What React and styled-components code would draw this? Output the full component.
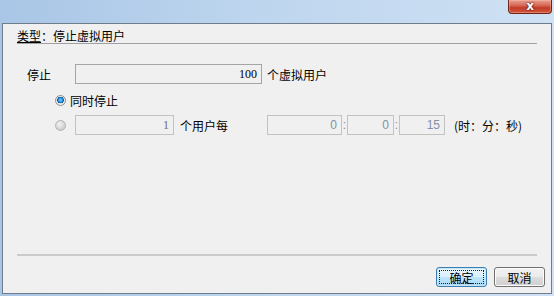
import React from 'react';
import styled, { createGlobalStyle } from 'styled-components';

const GlobalStyle = createGlobalStyle`
  html, body {
    margin: 0;
    padding: 0;
    overflow: hidden;
  }
  body {
    font-family: "Noto Sans CJK SC", "Liberation Sans", sans-serif;
    font-size: 12px;
    color: #000;
  }
`;

const Window = styled.div`
  position: relative;
  width: 554px;
  height: 296px;
  display: flex;
  flex-direction: column;
  background: linear-gradient(to right, #a9c6e6 0%, #bdd5ee 45%, #cfe1f4 100%);
`;

const TitleBar = styled.div`
  height: 23px;
  flex: none;
`;

const CloseButton = styled.div`
  position: absolute;
  top: 0;
  left: 508px;
  width: 44px;
  height: 14px;
  box-sizing: border-box;
  border: 1px solid #6e2418;
  border-top: none;
  border-radius: 0 0 4px 4px;
  background: linear-gradient(to bottom, #e8a090 0%, #d86a58 40%, #c23c28 60%, #d2583c 100%);
  box-shadow: inset 0 0 0 1px rgba(255, 200, 190, 0.35);
  display: flex;
  align-items: center;
  justify-content: center;
  color: #fff;
  font-family: "DejaVu Sans", sans-serif;
  font-weight: bold;
  font-size: 12px;
  line-height: 12px;
  padding-bottom: 1px;
  text-shadow: 0 0 2px #4a1008, 0 0 1px #4a1008;
`;

const Panel = styled.div`
  margin: 0 2px;
  height: 271px;
  box-sizing: border-box;
  border: 1px solid #6f7c8c;
  background: #f0f0f0;
  display: flex;
  flex-direction: column;
  padding: 5px 14px 6px 14px;
`;

const Heading = styled.div`
  height: 14px;
  line-height: 14px;
  border-bottom: 1px solid #a0a0a0;
`;

const Mnemonic = styled.span`
  text-decoration: underline;
  text-underline-offset: 1px;
`;

const Form = styled.div`
  display: flex;
  flex-direction: column;
  padding-left: 10px;
  padding-top: 20px;
`;

const Row = styled.div`
  display: flex;
  align-items: center;
  height: ${p => p.$h || 20}px;
  margin-top: ${p => p.$mt || 0}px;
  padding-left: ${p => p.$indent || 0}px;
`;

const Label = styled.span`
  width: ${p => (p.$w ? `${p.$w}px` : 'auto')};
  margin-left: ${p => p.$ml || 0}px;
  flex: none;
  white-space: nowrap;
`;

const Field = styled.div`
  width: ${p => p.$w}px;
  height: ${p => p.$h || 20}px;
  margin-left: ${p => p.$ml || 0}px;
  box-sizing: border-box;
  flex: none;
  border: 1px solid ${p => (p.$disabled ? '#c2c2c2' : '#a5a5a5')};
  background: #f0f0f0;
  display: flex;
  align-items: center;
  justify-content: flex-end;
  padding-right: 4px;
  font-family: ${p => (p.$sans ? '"Liberation Sans", sans-serif' : '"Liberation Serif", serif')};
  font-size: 12px;
  color: ${p => p.$color || '#000'};
`;

const Colon = styled.span`
  width: 5px;
  flex: none;
  text-align: center;
  font-family: "Liberation Sans", sans-serif;
  color: #8f8f8f;
`;

const Radio = styled.span`
  width: 11px;
  height: 11px;
  flex: none;
  box-sizing: border-box;
  border-radius: 50%;
  border: 1px solid ${p => (p.$checked ? '#8e8f8f' : '#b4b4b4')};
  background: ${p =>
    p.$checked
      ? 'radial-gradient(circle at 50% 45%, #7fd0ff 0%, #1c8ad6 35%, #14508f 48%, #e8e8e8 52%, #f6f6f6 100%)'
      : 'radial-gradient(circle at 40% 35%, #f4f4f4 0%, #d6d6d6 55%, #c2c2c2 100%)'};
`;

const Footer = styled.div`
  margin-top: auto;
  display: flex;
  flex-direction: column;
`;

const Separator = styled.div`
  height: 2px;
  margin: 0 0 11px 0;
  background: #cbcbcb;
`;

const Buttons = styled.div`
  display: flex;
  justify-content: flex-end;
  gap: 7px;
  margin-right: -8px;
`;

const Button = styled.button`
  width: 51px;
  height: 20px;
  padding: 0;
  box-sizing: border-box;
  border-radius: 3px;
  font-family: "Noto Sans CJK SC", sans-serif;
  font-size: 12px;
  color: #000;
  position: relative;
  border: 1px solid ${p => (p.$primary ? '#3c7fb1' : '#707070')};
  background: ${p =>
    p.$primary
      ? 'linear-gradient(to bottom, #eaf6fd 0%, #d9f0fc 50%, #bee6fd 51%, #a7d9f5 100%)'
      : 'linear-gradient(to bottom, #f2f2f2 0%, #ebebeb 50%, #dddddd 51%, #cfcfcf 100%)'};
  box-shadow: inset 0 0 0 1px ${p => (p.$primary ? '#c4e5f6' : '#fcfcfc')};
  display: flex;
  align-items: center;
  justify-content: center;

  &::after {
    content: '';
    display: ${p => (p.$primary ? 'block' : 'none')};
    position: absolute;
    inset: 2px;
    border: 1px dotted #202020;
  }
`;

const BottomStrip = styled.div`
  height: 2px;
  flex: none;
`;

export default function App() {
  return (
    <>
      <GlobalStyle />
      <Window>
        <TitleBar />
        <CloseButton>x</CloseButton>
        <Panel>
          <Heading>
            <Mnemonic>类型</Mnemonic>：停止虚拟用户
          </Heading>
          <Form>
            <Row>
              <Label $w={48}>停止</Label>
              <Field $w={187}>100</Field>
              <Label $ml={5}>个虚拟用户</Label>
            </Row>
            <Row $h={18} $mt={7} $indent={28}>
              <Radio $checked />
              <Label $ml={4}>同时停止</Label>
            </Row>
            <Row $mt={6} $indent={28}>
              <Radio />
              <Field $w={99} $ml={9} $disabled $color="#6d6d6d">1</Field>
              <Label $ml={6} $w={87}>个用户每</Label>
              <Field $w={75} $disabled $sans $color="#8190a6">0</Field>
              <Colon>:</Colon>
              <Field $w={47} $disabled $sans $color="#8190a6">0</Field>
              <Colon>:</Colon>
              <Field $w={46} $disabled $sans $color="#8190a6">15</Field>
              <Label $ml={9}>(时：分：秒)</Label>
            </Row>
          </Form>
          <Footer>
            <Separator />
            <Buttons>
              <Button $primary>确定</Button>
              <Button>取消</Button>
            </Buttons>
          </Footer>
        </Panel>
        <BottomStrip />
      </Window>
    </>
  );
}
